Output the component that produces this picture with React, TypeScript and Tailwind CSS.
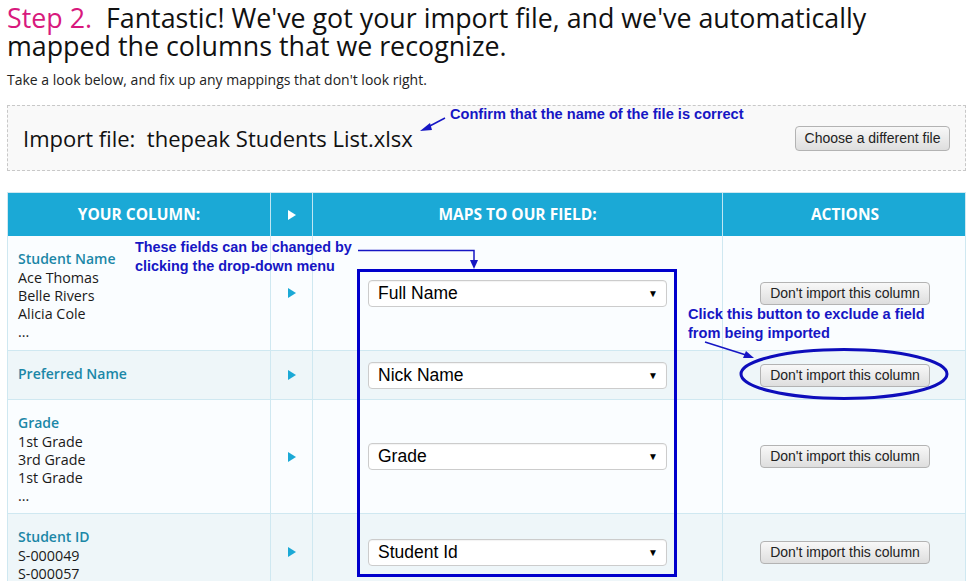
import React from "react";

const body = { fontFamily: "'Open Sans', Lato, sans-serif" };
const arial = { fontFamily: "'Liberation Sans', Arial, sans-serif" };

function Select({ label }: { label: string }) {
  return (
    <div
      className="flex h-[27px] w-[299px] items-center justify-between rounded-[4px] border border-[#cccccc] bg-white pl-[9px] pr-[8px] text-[17.5px] text-black shadow-[inset_0_1px_1px_rgba(0,0,0,0.05)]"
      style={arial}
    >
      <span>{label}</span>
      <span className="text-[10px]">▼</span>
    </div>
  );
}

function Btn({ label }: { label: string }) {
  return (
    <div
      className="flex h-[23px] w-[170px] items-center justify-center rounded-[4px] border border-[#b3b3b3] bg-gradient-to-b from-[#f8f8f8] to-[#dedede] text-[14px] text-[#222]"
      style={arial}
    >
      {label}
    </div>
  );
}

function Tri({ white }: { white?: boolean }) {
  return (
    <svg width="8" height="10" viewBox="0 0 8 10">
      <polygon points="0,0 8,5 0,10" fill={white ? "#ffffff" : "#1ba9d6"} />
    </svg>
  );
}

type Row = { title: string; lines: string[]; field: string; alt: boolean; h: string };

const rows: Row[] = [
  { title: "Student Name", lines: ["Ace Thomas", "Belle Rivers", "Alicia Cole", "..."], field: "Full Name", alt: false, h: "h-[115px]" },
  { title: "Preferred Name", lines: [], field: "Nick Name", alt: true, h: "h-[49px]" },
  { title: "Grade", lines: ["1st Grade", "3rd Grade", "1st Grade", "..."], field: "Grade", alt: false, h: "h-[114px]" },
  { title: "Student ID", lines: ["S-000049", "S-000057"], field: "Student Id", alt: true, h: "h-[77px]" },
];

export default function App() {
  return (
    <div className="relative h-[581px] w-[975px] overflow-hidden bg-white" style={body}>
      <div className="pl-[7px] pt-[4px]">
        <h1 className="whitespace-nowrap text-[26.8px] font-normal leading-[28px] text-[#111]">
          <span className="text-[#d8197d]">Step 2.</span>&nbsp; Fantastic! We've got your import file, and we've automatically
          <br />
          mapped the columns that we recognize.
        </h1>
        <p className="mt-[12px] text-[14px] leading-[16px] text-[#222]">
          Take a look below, and fix up any mappings that don't look right.
        </p>
      </div>

      <div className="ml-[7px] mt-[17px] flex h-[66px] w-[959px] items-center justify-between border border-dashed border-[#c8c8c8] bg-[#f9f9f9] pl-[15px] pr-[15px]">
        <div className="text-[22px] text-[#111]">Import file:&nbsp; thepeak Students List.xlsx</div>
        <div
          className="flex h-[25px] w-[155px] items-center justify-center rounded-[4px] border border-[#b3b3b3] bg-gradient-to-b from-[#f8f8f8] to-[#dedede] text-[14px] text-[#222]"
          style={arial}
        >
          Choose a different file
        </div>
      </div>

      <div className="ml-[7px] mt-[21px] w-[959px] border-x border-t border-[#cfe8f1]">
        <div className="grid h-[43px] grid-cols-[263px_42px_410px_244px] bg-[#1ba9d6] text-[15.5px] font-bold text-white">
          <div className="flex items-center justify-center border-r border-[#bfe6f3]">YOUR COLUMN:</div>
          <div className="flex items-center justify-center border-r border-[#bfe6f3]"><Tri white /></div>
          <div className="flex items-center justify-center border-r border-[#bfe6f3]">MAPS TO OUR FIELD:</div>
          <div className="flex items-center justify-center">ACTIONS</div>
        </div>
        {rows.map((r, i) => (
          <div
            key={i}
            className={`grid grid-cols-[263px_42px_410px_244px] border-b border-[#cfe8f1] ${r.h} ${r.alt ? "bg-[#eef6f9]" : "bg-[#fafdff]"}`}
          >
            <div className="border-r border-[#cfe8f1] px-[10px] pt-[12px]">
              <div className="text-[14px] font-semibold leading-[21px] text-[#1b87a7]">{r.title}</div>
              {r.lines.map((l, j) => (
                <div key={j} className="text-[14.3px] leading-[18px] text-[#1a1a1a]">{l}</div>
              ))}
            </div>
            <div className="flex items-center justify-center border-r border-[#cfe8f1]"><Tri /></div>
            <div className="flex items-center justify-center border-r border-[#cfe8f1]">
              <Select label={r.field} />
            </div>
            <div className="flex items-center justify-center"><Btn label="Don't import this column" /></div>
          </div>
        ))}
      </div>

      {/* annotations */}
      <div className="pointer-events-none absolute left-[450px] top-[105px] text-[14.6px] font-bold leading-[18px] text-[#1616c4]" style={arial}>
        Confirm that the name of the file is correct
      </div>
      <div className="pointer-events-none absolute left-[135px] top-[238px] text-[14.4px] font-bold leading-[19px] text-[#1616c4]" style={arial}>
        These fields can be changed by
        <br />
        clicking the drop-down menu
      </div>
      <div className="pointer-events-none absolute left-[688px] top-[305px] text-[14.6px] font-bold leading-[19px] text-[#1616c4]" style={arial}>
        Click this button to exclude a field
        <br />
        from being imported
      </div>

      <svg className="pointer-events-none absolute left-0 top-0" width="975" height="581" viewBox="0 0 975 581">
        <line x1="445" y1="118" x2="426" y2="128" stroke="#1616c4" strokeWidth="1.5" />
        <polygon points="420,131 430,123 432,130" fill="#1616c4" />
        <path d="M358 250.5 H474 V262" fill="none" stroke="#1616c4" strokeWidth="1.5" />
        <polygon points="470,260 478,260 474,269" fill="#1616c4" />
        <rect x="358.5" y="270.5" width="317" height="305" fill="none" stroke="#0000cc" strokeWidth="3" />
        <line x1="705" y1="342" x2="746" y2="355" stroke="#1616c4" strokeWidth="1.5" />
        <polygon points="754,358 743,358 746,351" fill="#1616c4" />
        <ellipse cx="844" cy="374" rx="103" ry="24.5" fill="none" stroke="#0d0dbb" strokeWidth="3" />
      </svg>
    </div>
  );
}
